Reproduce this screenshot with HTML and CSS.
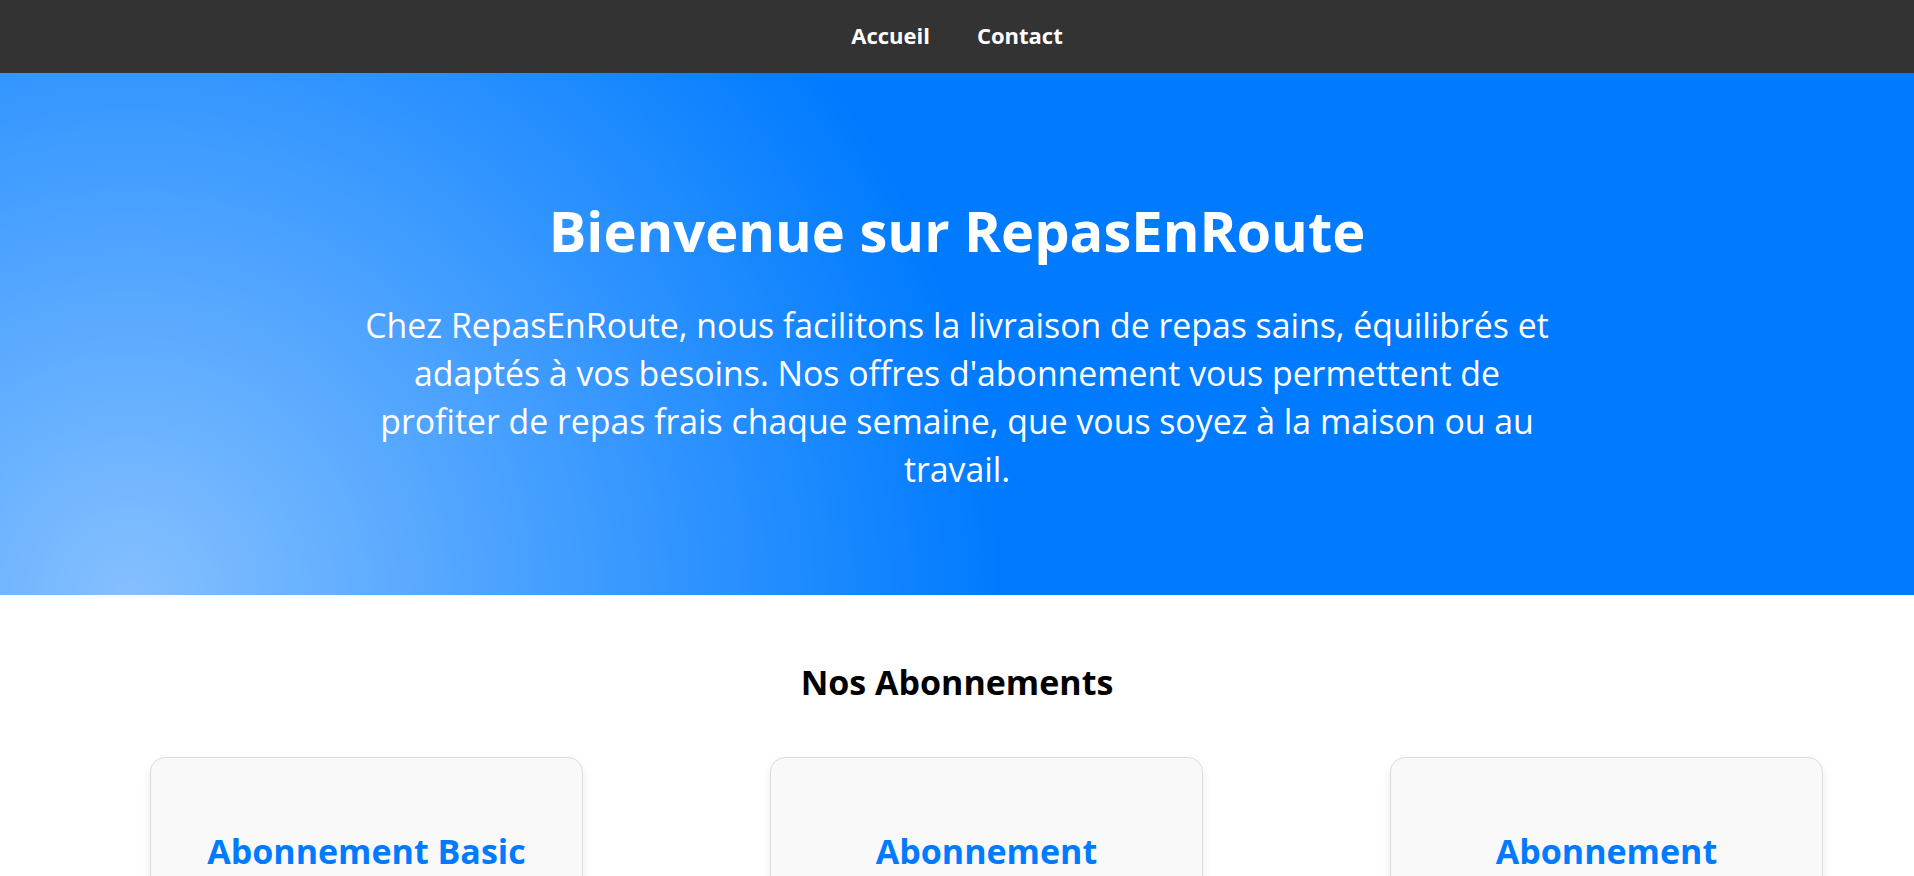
FILE: index.html
```html
<!DOCTYPE html>
<html lang="fr">
<head>
<meta charset="utf-8">
<title>RepasEnRoute</title>
<link rel="stylesheet" href="styles.css">
</head>
<body>
<nav class="topnav">
  <a href="#" class="topnav-link">Accueil</a>
  <a href="#" class="topnav-link">Contact</a>
</nav>
<header class="hero">
  <h1 class="hero-title">Bienvenue sur RepasEnRoute</h1>
  <p class="hero-text">Chez RepasEnRoute, nous facilitons la livraison de repas sains, équilibrés et adaptés à vos besoins. Nos offres d'abonnement vous permettent de profiter de repas frais chaque semaine, que vous soyez à la maison ou au travail.</p>
</header>
<section class="plans">
  <h2 class="plans-title">Nos Abonnements</h2>
  <div class="plans-list">
    <div class="plan-card">
      <h3 class="plan-name">Abonnement Basic</h3>
      <p class="plan-desc">5 repas par semaine, livrés chez vous.</p>
    </div>
    <div class="plan-card">
      <h3 class="plan-name">Abonnement Premium</h3>
      <p class="plan-desc">10 repas par semaine, menus personnalisés.</p>
    </div>
    <div class="plan-card">
      <h3 class="plan-name">Abonnement Entreprise</h3>
      <p class="plan-desc">Des repas pour toute votre équipe.</p>
    </div>
  </div>
</section>
</body>
</html>
```
FILE: styles.css
```css
body {
  margin: 0;
  font-family: "Open Sans", "Noto Sans", sans-serif;
  color: #000;
  background: #fff;
}

.topnav {
  height: 73px;
  box-sizing: border-box;
  padding-bottom: 4px;
  background: #333;
  display: flex;
  justify-content: center;
  align-items: center;
  gap: 47px;
}

.topnav-link {
  color: #fff;
  text-decoration: none;
  font-weight: 700;
  font-size: 22px;
  line-height: 30px;
}

.hero {
  height: 522px;
  box-sizing: border-box;
  padding-top: 121px;
  text-align: center;
  color: #fff;
  background: radial-gradient(circle at 130px 100%, rgba(255,255,255,0.52) 0, rgba(255,255,255,0) 870px), #007bff;
}

.hero-title {
  margin: 0;
  font-size: 56px;
  line-height: 72px;
  font-weight: 700;
}

.hero-text {
  margin: 35px auto 0;
  max-width: 1200px;
  font-size: 33.8px;
  line-height: 48px;
}

.plans {
  text-align: center;
  padding-top: 67px;
}

.plans-title {
  margin: 0;
  font-size: 34px;
  line-height: 40px;
  font-weight: 700;
}

.plans-list {
  display: flex;
  gap: 187px;
  padding-left: 150px;
  margin-top: 55px;
}

.plan-card {
  width: 433px;
  box-sizing: border-box;
  background: #f9f9f9;
  border: 1px solid #ddd;
  border-radius: 15px;
  box-shadow: 0 4px 10px rgba(0,0,0,0.08);
  padding: 73px 30px 40px;
}

.plan-name {
  margin: 0;
  color: #007bff;
  font-size: 34px;
  line-height: 40px;
  font-weight: 700;
}

.plan-desc {
  font-size: 20px;
  color: #555;
}
```
